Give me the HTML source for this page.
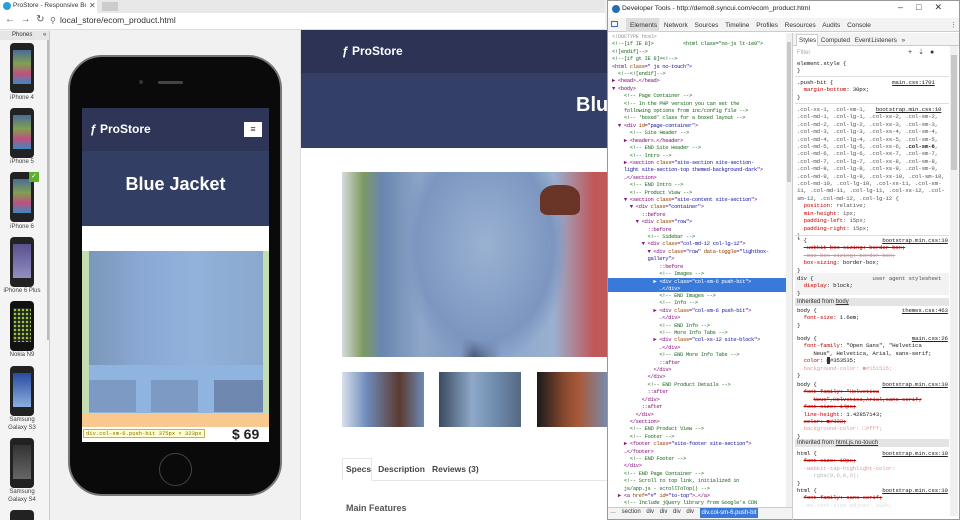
<!DOCTYPE html>
<html style="overflow:hidden"><head><meta charset="utf-8"><style>
*{margin:0;padding:0;box-sizing:border-box}
html,body{width:960px;height:520px;overflow:hidden}
body{background:#f1f1f1;font-family:"Liberation Sans",sans-serif;position:relative}
.a{position:absolute}
.code{font-family:"Liberation Mono",monospace;font-size:5.6px;letter-spacing:-0.4px;line-height:7.4px;white-space:pre;color:#881280}
.c{color:#236e25}.t{color:#881280}.at{color:#994500}.v{color:#1a1aa6}.g{color:#999}
.sty{font-family:"Liberation Mono",monospace;font-size:5.8px;letter-spacing:-0.2px;line-height:7.4px;white-space:pre;color:#222}
.p{color:#c80000}.s{text-decoration:line-through;color:#c80000}.l{text-decoration:underline;color:#222}
.thumb{position:absolute;left:10px;width:24px;height:50px;background:#222;border-radius:4px}
.thumb i{position:absolute;left:3px;top:7px;width:18px;height:34px;background:linear-gradient(#4a6a9a,#7fa050 40%,#c05080 70%,#3a8abf)}
.lbl{position:absolute;left:0;width:44px;text-align:center;font-size:6px;color:#444}
</style></head><body>
<div class="a" style="left:0;top:0;width:605px;height:13px;background:#e8e8e8"></div>
<div class="a" style="left:0;top:0;width:97px;height:13px;background:#fff"></div>
<div class="a" style="left:3px;top:2px;width:8px;height:8px;border-radius:50%;background:#2a9fd8"></div>
<div class="a" style="left:13px;top:2px;width:73px;overflow:hidden;white-space:nowrap;font-size:6.5px;color:#333">ProStore - Responsive Boot</div>
<div class="a" style="left:89px;top:1px;font-size:8px;color:#555">✕</div>
<div class="a" style="left:102px;top:2px;width:16px;height:9px;background:#ccc"></div>
<div class="a" style="left:0;top:13px;width:605px;height:17px;background:#fff;border-bottom:1px solid #ddd"></div>
<div class="a" style="left:5px;top:14px;font-size:10px;color:#555">←&nbsp;&nbsp;→&nbsp;&nbsp;↻</div>
<div class="a" style="left:50px;top:16px;font-size:8px;color:#666">⚲</div>
<div class="a" style="left:60px;top:15px;font-size:8.5px;color:#333">local_store/ecom_product.html</div>
<div class="a" style="left:0;top:31px;width:50px;height:489px;background:#f4f4f4;border-right:1px solid #ccc;overflow:hidden">
<div class="a" style="left:0;top:0;width:50px;height:9px;background:#e6e6e6;font-size:6px;color:#333;padding-left:12px;line-height:9px">Phones <span style="margin-left:9px">«</span></div>
<div class="a" style="left:47px;top:9px;width:2px;height:300px;background:#bbb"></div>
<div class="thumb" style="top:12px"><i></i></div><div class="lbl" style="top:64px">iPhone 4</div>
<div class="thumb" style="top:77px"><i></i></div><div class="lbl" style="top:128px">iPhone 5</div>
<div class="thumb" style="top:141px"><i></i></div><div class="lbl" style="top:193px">iPhone 6</div>
<div class="a" style="left:29px;top:141px;width:10px;height:10px;background:#5cb030;color:#fff;font-size:7px;text-align:center;line-height:10px">✓</div>
<div class="thumb" style="top:206px"><i style="background:linear-gradient(#5a5090,#9090c0)"></i></div><div class="lbl" style="top:257px">iPhone 6 Plus</div>
<div class="thumb" style="top:270px;background:#111"><i style="background:#222;background-image:radial-gradient(#9c3 1px,transparent 1.5px);background-size:4px 4px"></i></div><div class="lbl" style="top:321px">Nokia N9</div>
<div class="thumb" style="top:335px"><i style="background:linear-gradient(#2a4aa0,#8ab0e0)"></i></div><div class="lbl" style="top:386px;line-height:7.5px">Samsung<br>Galaxy S3</div>
<div class="thumb" style="top:407px"><i style="background:linear-gradient(#333,#666)"></i></div><div class="lbl" style="top:458px;line-height:7.5px">Samsung<br>Galaxy S4</div>
<div class="thumb" style="top:479px;height:10px;border-radius:4px 4px 0 0"></div>
</div>
<div class="a" style="left:68px;top:55px;width:214px;height:441px;border-radius:34px;background:#0a0a0a;border:2px solid #777"></div>
<div class="a" style="left:158px;top:81px;width:25px;height:3px;border-radius:2px;background:#444"></div>
<div class="a" style="left:139px;top:80px;width:4px;height:4px;border-radius:50%;background:#333"></div>
<div class="a" style="left:159px;top:453px;width:33px;height:33px;border-radius:50%;border:1.5px solid #444"></div>
<div class="a" style="left:82px;top:108px;width:187px;height:334px;background:#fff;overflow:hidden">
 <div class="a" style="left:0;top:0;width:187px;height:43px;background:#2e3557"></div>
 <div class="a" style="left:8px;top:14px;font-size:12px;font-weight:bold;color:#fff">ƒ ProStore</div>
 <div class="a" style="left:162px;top:14px;width:18px;height:15px;background:#fff;font-size:9px;text-align:center;line-height:15px;color:#333">≡</div>
 <div class="a" style="left:0;top:43px;width:187px;height:75px;background:#333e64"></div>
 <div class="a" style="left:0;top:66px;width:187px;text-align:center;font-size:18px;font-weight:bold;color:#fff">Blue Jacket</div>
 <div class="a" style="left:0;top:143px;width:187px;height:162px;background:#c3dcb0"></div>
 <div class="a" style="left:7px;top:143px;width:174px;height:162px;background:#8fb4df"></div>
 <div class="a" style="left:7px;top:143px;width:174px;height:114px;background:linear-gradient(90deg,#7a98b8,#8aa8d4 30%,#92b2dc 60%,#8aa8cc)"></div>
 <div class="a" style="left:7px;top:272px;width:47px;height:32px;background:#7c9ac4"></div>
 <div class="a" style="left:69px;top:272px;width:47px;height:32px;background:#7c9ac4"></div>
 <div class="a" style="left:132px;top:272px;width:49px;height:32px;background:#6e88b0"></div>
 <div class="a" style="left:0;top:305px;width:187px;height:14px;background:#f8c88e"></div>
 <div class="a" style="left:1px;top:321px;padding:0 2px;background:#ffffd0;border:1px solid #c9b04a;font-family:'Liberation Mono',monospace;font-size:5.5px;color:#8a6a00;line-height:7px">div.col-sm-6.push-bit 375px × 323px</div>
 <div class="a" style="left:150px;top:318px;font-size:14px;font-weight:bold;color:#222">$ 69</div>
</div>
<div class="a" style="left:300px;top:30px;width:307px;height:490px;background:#fff;border-left:1px solid #ddd"></div>
<div class="a" style="left:301px;top:30px;width:306px;height:43px;background:#2c3354"></div>
<div class="a" style="left:342px;top:44px;font-size:12px;font-weight:bold;color:#fff">ƒ ProStore</div>
<div class="a" style="left:301px;top:73px;width:306px;height:75px;background:#333f66"></div>
<div class="a" style="left:576px;top:94px;font-size:20px;font-weight:bold;color:#fff">Blu</div>
<div class="a" style="left:342px;top:172px;width:265px;height:185px;background:linear-gradient(90deg,#d8dadc 0,#7c9a60 8%,#6a86b0 15%,#8ea6c8 30%,#7e98c0 45%,#38435e 50%,#8ca6cc 60%,#9ab0d0 80%,#c0585a 95%)"></div>
<div class="a" style="left:405px;top:172px;width:160px;height:185px;background:radial-gradient(ellipse at 50% 40%,#9ab2d2,#7c96c0 60%,transparent 75%)"></div>
<div class="a" style="left:540px;top:185px;width:40px;height:30px;background:#6a3526;border-radius:40% 40% 20% 20%"></div>
<div class="a" style="left:342px;top:372px;width:82px;height:55px;background:linear-gradient(90deg,#d8e0ec,#6f8bbb 30%,#5a3a30 70%,#6f8ab5)"></div>
<div class="a" style="left:439px;top:372px;width:82px;height:55px;background:linear-gradient(90deg,#3a4a60,#8ea8c8 40%,#6e8aac 70%,#556a80)"></div>
<div class="a" style="left:537px;top:372px;width:70px;height:55px;background:linear-gradient(90deg,#1a1a1a,#8a4a30 40%,#a85a3a 60%,#7a8aaa)"></div>
<div class="a" style="left:342px;top:480px;width:265px;height:1px;background:#e6e6e6"></div>
<div class="a" style="left:342px;top:458px;width:30px;height:23px;border:1px solid #e6e6e6;border-bottom-color:#fff;background:#fff"></div>
<div class="a" style="left:346px;top:464px;font-size:8.5px;font-weight:bold;color:#444">Specs&nbsp;&nbsp;&nbsp;Description&nbsp;&nbsp;&nbsp;Reviews (3)</div>
<div class="a" style="left:346px;top:503px;font-size:9px;font-weight:bold;color:#555">Main Features</div>
<div class="a" style="left:607px;top:0;width:353px;height:520px;background:#fff;border:1px solid #999"></div>
<div class="a" style="left:612px;top:5px;width:8px;height:8px;border-radius:50%;background:#2a6ab0"></div>
<div class="a" style="left:622px;top:5px;font-size:6.8px;color:#222">Developer Tools - http://demo8.syncui.com/ecom_product.html</div>
<div class="a" style="left:898px;top:2px;font-size:9px;color:#333;letter-spacing:13px">–□✕</div>
<div class="a" style="left:608px;top:18px;width:351px;height:14px;background:#f3f3f3;border-bottom:1px solid #ccc"></div>
<div class="a" style="left:611px;top:21px;width:7px;height:6px;border:1px solid #3a6cc0"></div>
<div class="a" style="left:626px;top:18px;width:33px;height:14px;background:#ddd"></div>
<div class="a" style="left:630px;top:22px;font-size:6.5px;color:#333;word-spacing:5px">Elements Network Sources Timeline Profiles Resources Audits Console</div>
<div class="a" style="left:950px;top:21px;font-size:7px;color:#555">⋮</div>
<div class="a code" style="left:612px;top:33px;width:175px;overflow:hidden"><span class="g">&lt;!DOCTYPE html&gt;</span>
<span class="c">&lt;!--[if IE 8]&gt;          &lt;html class="no-js lt-ie9"&gt;</span>
<span class="c">&lt;![endif]--&gt;</span>
<span class="c">&lt;!--[if gt IE 8]&gt;&lt;!--&gt;</span>
&lt;html <span class="at">class</span>=<span class="v">" js no-touch"</span>&gt;
  <span class="c">&lt;!--&lt;![endif]--&gt;</span>
▶ &lt;head&gt;…&lt;/head&gt;
▼ &lt;body&gt;
    <span class="c">&lt;!-- Page Container --&gt;</span>
    <span class="c">&lt;!-- In the PHP version you can set the</span>
<span class="c">    following options from inc/config file --&gt;</span>
    <span class="c">&lt;!-- 'boxed' class for a boxed layout --&gt;</span>
  ▼ &lt;div <span class="at">id</span>=<span class="v">"page-container"</span>&gt;
      <span class="c">&lt;!-- Site Header --&gt;</span>
    ▶ &lt;header&gt;…&lt;/header&gt;
      <span class="c">&lt;!-- END Site Header --&gt;</span>
      <span class="c">&lt;!-- Intro --&gt;</span>
    ▶ &lt;section <span class="at">class</span>=<span class="v">"site-section site-section-</span>
<span class="v">    light site-section-top themed-background-dark"</span>&gt;
    …&lt;/section&gt;
      <span class="c">&lt;!-- END Intro --&gt;</span>
      <span class="c">&lt;!-- Product View --&gt;</span>
    ▼ &lt;section <span class="at">class</span>=<span class="v">"site-content site-section"</span>&gt;
      ▼ &lt;div <span class="at">class</span>=<span class="v">"container"</span>&gt;
          ::before
        ▼ &lt;div <span class="at">class</span>=<span class="v">"row"</span>&gt;
            ::before
            <span class="c">&lt;!-- Sidebar --&gt;</span>
          ▼ &lt;div <span class="at">class</span>=<span class="v">"col-md-12 col-lg-12"</span>&gt;
            ▼ &lt;div <span class="at">class</span>=<span class="v">"row"</span> <span class="at">data-toggle</span>=<span class="v">"lightbox-</span>
<span class="v">            gallery"</span>&gt;
                ::before
                <span class="c">&lt;!-- Images --&gt;</span>
</div>
<div class="a" style="left:608px;top:278px;width:178px;height:14px;background:#3879d9"></div>
<div class="a code" style="left:612px;top:278px;width:175px;color:#fff">              ▶ &lt;div class="col-sm-6 push-bit"&gt;
                …&lt;/div&gt;</div>
<div class="a code" style="left:612px;top:292px;width:175px;height:214px;overflow:hidden">                <span class="c">&lt;!-- END Images --&gt;</span>
                <span class="c">&lt;!-- Info --&gt;</span>
              ▶ &lt;div <span class="at">class</span>=<span class="v">"col-sm-6 push-bit"</span>&gt;
                …&lt;/div&gt;
                <span class="c">&lt;!-- END Info --&gt;</span>
                <span class="c">&lt;!-- More Info Tabs --&gt;</span>
              ▶ &lt;div <span class="at">class</span>=<span class="v">"col-xs-12 site-block"</span>&gt;
                …&lt;/div&gt;
                <span class="c">&lt;!-- END More Info Tabs --&gt;</span>
                ::after
              &lt;/div&gt;
            &lt;/div&gt;
            <span class="c">&lt;!-- END Product Details --&gt;</span>
            ::after
          &lt;/div&gt;
          ::after
        &lt;/div&gt;
      &lt;/section&gt;
      <span class="c">&lt;!-- END Product View --&gt;</span>
      <span class="c">&lt;!-- Footer --&gt;</span>
    ▶ &lt;footer <span class="at">class</span>=<span class="v">"site-footer site-section"</span>&gt;
    …&lt;/footer&gt;
      <span class="c">&lt;!-- END Footer --&gt;</span>
    &lt;/div&gt;
    <span class="c">&lt;!-- END Page Container --&gt;</span>
    <span class="c">&lt;!-- Scroll to top link, initialized in</span>
<span class="c">    js/app.js - scrollToTop() --&gt;</span>
  ▶ &lt;a <span class="at">href</span>=<span class="v">"#"</span> <span class="at">id</span>=<span class="v">"to-top"</span>&gt;…&lt;/a&gt;
    <span class="c">&lt;!-- Include jQuery library from Google's CDN</span></div>
<div class="a" style="left:786px;top:33px;width:6px;height:474px;background:#f0f0f0"></div>
<div class="a" style="left:787px;top:42px;width:4px;height:140px;background:#c8c8c8"></div>
<div class="a" style="left:792px;top:33px;width:1px;height:487px;background:#ccc"></div>
<div class="a" style="left:608px;top:507px;width:184px;height:12px;background:#f3f3f3;border-top:1px solid #ccc"></div>
<div class="a" style="left:610px;top:509px;font-size:6px;color:#333;word-spacing:4px">… section div div div div</div>
<div class="a" style="left:700px;top:508px;width:58px;height:10px;background:#3879d9;color:#fff;font-size:6px;line-height:10px;text-align:center">div.col-sm-6.push-bit</div>
<div class="a" style="left:793px;top:33px;width:166px;height:13px;background:#f3f3f3;border-bottom:1px solid #ccc"></div>
<div class="a" style="left:796px;top:34px;width:22px;height:12px;background:#fff;border:1px solid #ccc;border-bottom:none"></div>
<div class="a" style="left:799px;top:37px;font-size:6.3px;color:#333;word-spacing:3px">Styles Computed Event&#8202;Listeners »</div>
<div class="a" style="left:797px;top:50px;font-size:6px;color:#aaa">Filter</div>
<div class="a" style="left:908px;top:48px;font-size:7px;color:#333;letter-spacing:6px">+⇣●</div>
<div class="a sty" style="left:797px;top:60px;width:152px;overflow:hidden">element.style {
}</div>
<div class="a" style="left:795px;top:76px;width:154px;height:1px;background:#ddd"></div>
<div class="a sty" style="left:797px;top:79px;width:152px;overflow:hidden">.push-bit {                  <span class="l">main.css:1701</span>
  <span class="p">margin-bottom</span>: 30px;
}</div>
<div class="a" style="left:795px;top:103px;width:154px;height:1px;background:#ddd"></div>
<div class="a sty" style="left:797px;top:106px;width:152px;overflow:hidden;color:#555">.col-xs-1, .col-sm-1,   <span class="l">bootstrap.min.css:10</span>
.col-md-1, .col-lg-1, .col-xs-2, .col-sm-2,
.col-md-2, .col-lg-2, .col-xs-3, .col-sm-3,
.col-md-3, .col-lg-3, .col-xs-4, .col-sm-4,
.col-md-4, .col-lg-4, .col-xs-5, .col-sm-5,
.col-md-5, .col-lg-5, .col-xs-6, <b style="color:#222">.col-sm-6</b>,
.col-md-6, .col-lg-6, .col-xs-7, .col-sm-7,
.col-md-7, .col-lg-7, .col-xs-8, .col-sm-8,
.col-md-8, .col-lg-8, .col-xs-9, .col-sm-9,
.col-md-9, .col-lg-9, .col-xs-10, .col-sm-10,
.col-md-10, .col-lg-10, .col-xs-11, .col-sm-
11, .col-md-11, .col-lg-11, .col-xs-12, .col-
sm-12, .col-md-12, .col-lg-12 {
  <span class="p">position</span>: relative;
  <span class="p">min-height</span>: 1px;
  <span class="p">padding-left</span>: 15px;
  <span class="p">padding-right</span>: 15px;
}</div>
<div class="a" style="left:795px;top:235px;width:154px;height:1px;background:#ddd"></div>
<div class="a sty" style="left:797px;top:237px;width:152px;overflow:hidden">* {                       <span class="l">bootstrap.min.css:10</span>
  <span class="s">-webkit-box-sizing: border-box;</span>
  <span class="s" style="color:#c99">-moz-box-sizing: border-box;</span>
  <span class="p">box-sizing</span>: border-box;
}</div>
<div class="a" style="left:795px;top:273px;width:154px;height:22px;background:#f2f2f2"></div>
<div class="a sty" style="left:797px;top:275px;width:152px;overflow:hidden">div {                  <span style="color:#555">user agent stylesheet</span>
  <span class="p">display</span>: block;
}</div>
<div class="a" style="left:795px;top:298px;width:154px;height:8px;background:#e4e4e4;font-size:6px;line-height:8px;padding-left:2px;color:#333">Inherited from <u>body</u></div>
<div class="a sty" style="left:797px;top:307px;width:152px;overflow:hidden">body {                          <span class="l">themes.css:463</span>
  <span class="p">font-size</span>: 1.6em;
}</div>
<div class="a sty" style="left:797px;top:335px;width:152px;overflow:hidden">body {                             <span class="l">main.css:26</span>
  <span class="p">font-family</span>: "Open Sans", "Helvetica
     Neue", Helvetica, Arial, sans-serif;
  <span class="p">color</span>: <span style="background:#353535;color:#353535">■</span>#353535;
  <span style="color:#e0a0a0">background-color: ■#151515;</span>
}</div>
<div class="a sty" style="left:797px;top:381px;width:152px;overflow:hidden">body {                    <span class="l">bootstrap.min.css:10</span>
  <span class="s">font-family: "Helvetica</span>
     <span class="s">Neue",Helvetica,Arial,sans-serif;</span>
  <span class="s">font-size: 14px;</span>
  <span class="p">line-height</span>: 1.42857143;
  <span class="s">color: ■#333;</span>
  <span style="color:#e0a0a0">background-color: □#fff;</span>
}</div>
<div class="a" style="left:795px;top:439px;width:154px;height:8px;background:#e4e4e4;font-size:6px;line-height:8px;padding-left:2px;color:#333">Inherited from <u>html.js.no-touch</u></div>
<div class="a sty" style="left:797px;top:450px;width:152px;height:68px;overflow:hidden">html {                    <span class="l">bootstrap.min.css:10</span>
  <span class="s">font-size: 10px;</span>
  <span style="color:#e0a0a0">-webkit-tap-highlight-color:</span>
     <span style="color:#bbb">rgba(0,0,0,0);</span>
}
html {                    <span class="l">bootstrap.min.css:10</span>
  <span class="s">font-family: sans-serif;</span>
  <span style="color:#ddd">-ms-text-size-adjust: 100%;</span></div>
<div class="a" style="left:950px;top:46px;width:8px;height:470px;background:#f0f0f0"></div>
<div class="a" style="left:951px;top:55px;width:6px;height:115px;background:#c8c8c8"></div>
</body></html>
